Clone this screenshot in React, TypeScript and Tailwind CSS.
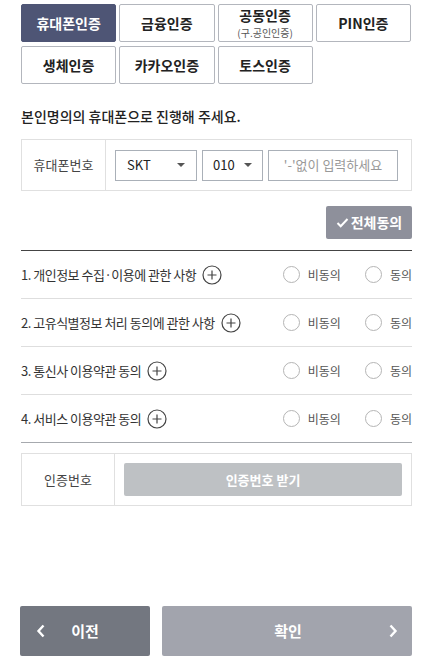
import React from 'react';

const tabs = [
  { label: '휴대폰인증', active: true },
  { label: '금융인증' },
  { label: '공동인증', sub: '(구.공인인증)' },
  { label: 'PIN인증' },
  { label: '생체인증' },
  { label: '카카오인증' },
  { label: '토스인증' },
];

const terms = [
  '1. 개인정보 수집·이용에 관한 사항',
  '2. 고유식별정보 처리 동의에 관한 사항',
  '3. 통신사 이용약관 동의',
  '4. 서비스 이용약관 동의',
];

function PlusCircle() {
  return (
    <svg width="20" height="20" viewBox="0 0 20 20" className="shrink-0">
      <circle cx="10" cy="10" r="9" fill="none" stroke="#444" strokeWidth="1.2" />
      <path d="M10 5.5v9M5.5 10h9" stroke="#444" strokeWidth="1.2" />
    </svg>
  );
}

function Radio({ label }: { label: string }) {
  return (
    <label className="flex items-center gap-[8px]">
      <span className="w-[17px] h-[17px] rounded-full border border-[#b5b5b5] bg-white" />
      <span className="text-[12px] text-[#555]">{label}</span>
    </label>
  );
}

function Caret() {
  return <span className="w-0 h-0 border-l-[4px] border-r-[4px] border-t-[4px] border-l-transparent border-r-transparent border-t-[#555]" />;
}

export default function App() {
  return (
    <div
      className="w-[426px] h-[664px] bg-white flex flex-col px-[21px] pt-[4px] text-[#333]"
      style={{ fontFamily: '"Noto Sans CJK KR", "Noto Sans", sans-serif' }}
    >
      {/* method tabs */}
      <div className="grid grid-cols-4 gap-x-[3px] gap-y-[4px] w-[390px]">
        {tabs.map((t) => (
          <button
            key={t.label}
            className={
              'h-[38px] rounded-[2px] flex flex-col items-center justify-center leading-none ' +
              (t.active
                ? 'bg-[#4e5575] text-white border border-[#4e5575]'
                : 'bg-white text-[#222] border border-[#b3b6bd]')
            }
          >
            <span className="text-[14px] font-bold leading-[15px]">{t.label}</span>
            {t.sub && <span className="text-[10px] leading-[11px] text-[#555] mt-[4px]">{t.sub}</span>}
          </button>
        ))}
      </div>

      <p className="mt-[22px] text-[14px] font-medium text-[#222] leading-[20px]">본인명의의 휴대폰으로 진행해 주세요.</p>

      {/* phone number */}
      <div className="mt-[13px] h-[52px] border border-[#e0e0e0] flex w-[391px]">
        <div className="w-[84px] border-r border-[#e0e0e0] flex items-center justify-center text-[13px] text-[#444]">휴대폰번호</div>
        <div className="flex items-center pl-[9px] gap-[5px]">
          <div className="w-[82px] h-[31px] border border-[#aab0b8] flex items-center justify-between px-[11px] text-[13px] text-[#222]">
            <span>SKT</span>
            <Caret />
          </div>
          <div className="w-[61px] h-[31px] border border-[#aab0b8] flex items-center justify-between px-[10px] text-[13px] text-[#222]">
            <span>010</span>
            <Caret />
          </div>
          <div className="w-[130px] h-[31px] border border-[#aab0b8] flex items-center justify-center text-[13px] text-[#999]">'-'없이 입력하세요</div>
        </div>
      </div>

      <div className="flex justify-end mt-[15px] w-[391px]">
        <button className="w-[86px] h-[33px] rounded-[2px] bg-[#8e909b] text-white text-[14px] font-bold flex items-center justify-center gap-[2px]">
          <svg width="13" height="13" viewBox="0 0 13 13">
            <path d="M1.5 7l3.2 3.2L11.5 3" fill="none" stroke="#fff" strokeWidth="2" />
          </svg>
          전체동의
        </button>
      </div>

      {/* terms */}
      <div className="mt-[11px] border-t border-[#444] w-[391px]">
        {terms.map((t, i) => (
          <div
            key={t}
            className={
              'h-[48px] flex items-center justify-between ' +
              (i === terms.length - 1 ? 'border-b border-[#a6a9ae]' : 'border-b border-[#dedede]')
            }
          >
            <div className="flex items-center gap-[6px] text-[13px] text-[#333] tracking-[-0.5px]">
              <span>{t}</span>
              <PlusCircle />
            </div>
            <div className="flex items-center gap-[24px]">
              <Radio label="비동의" />
              <Radio label="동의" />
            </div>
          </div>
        ))}
      </div>

      {/* auth number */}
      <div className="mt-[10px] h-[53px] border border-[#e0e0e0] flex w-[391px]">
        <div className="w-[93px] border-r border-[#e0e0e0] flex items-center justify-center text-[13px] text-[#444]">인증번호</div>
        <div className="flex-1 flex items-center pl-[9px] pr-[9px]">
          <button className="w-full h-[33px] rounded-[2px] bg-[#bec1c4] text-white text-[13px] font-bold">인증번호 받기</button>
        </div>
      </div>

      {/* nav buttons */}
      <div className="mt-auto mb-[8px] flex gap-[12px] w-[392px] -ml-[1px]">
        <button className="w-[130px] h-[50px] rounded-[2px] bg-[#737780] text-white text-[15px] font-bold flex items-center px-[16px]">
          <svg width="10" height="14" viewBox="0 0 10 14">
            <path d="M7.5 1.5L2.5 7l5 5.5" fill="none" stroke="#fff" strokeWidth="2.4" />
          </svg>
          <span className="flex-1 text-center pr-[10px]">이전</span>
        </button>
        <button className="flex-1 h-[50px] rounded-[2px] bg-[#a2a4ad] text-white text-[15px] font-bold flex items-center pl-[26px] pr-[14px]">
          <span className="flex-1 text-center">확인</span>
          <svg width="10" height="14" viewBox="0 0 10 14">
            <path d="M2.5 1.5L7.5 7l-5 5.5" fill="none" stroke="#fff" strokeWidth="2.4" />
          </svg>
        </button>
      </div>
    </div>
  );
}
